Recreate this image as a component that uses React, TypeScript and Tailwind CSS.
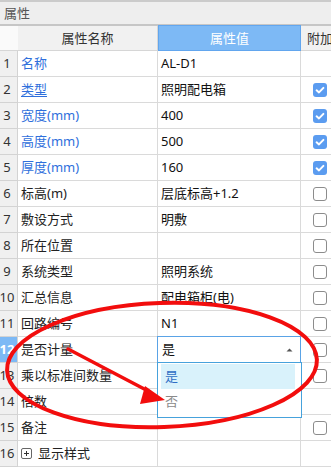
import React from "react";

type Row = {
  n: number;
  name: string;
  val: string;
  blue?: boolean;
  underline?: boolean;
  cb: boolean | null;
  plus?: boolean;
  selected?: boolean;
};

const rows: Row[] = [
  { n: 1, name: "名称", val: "AL-D1", blue: true, cb: null },
  { n: 2, name: "类型", val: "照明配电箱", blue: true, underline: true, cb: true },
  { n: 3, name: "宽度(mm)", val: "400", blue: true, cb: true },
  { n: 4, name: "高度(mm)", val: "500", blue: true, cb: true },
  { n: 5, name: "厚度(mm)", val: "160", blue: true, cb: true },
  { n: 6, name: "标高(m)", val: "层底标高+1.2", cb: false },
  { n: 7, name: "敷设方式", val: "明敷", cb: false },
  { n: 8, name: "所在位置", val: "", cb: false },
  { n: 9, name: "系统类型", val: "照明系统", cb: false },
  { n: 10, name: "汇总信息", val: "配电箱柜(电)", cb: false },
  { n: 11, name: "回路编号", val: "N1", cb: false },
  { n: 12, name: "是否计量", val: "是", cb: false, selected: true },
  { n: 13, name: "乘以标准间数量", val: "", cb: false },
  { n: 14, name: "倍数", val: "", cb: null },
  { n: 15, name: "备注", val: "", cb: false },
  { n: 16, name: "显示样式", val: "", cb: null, plus: true },
];

function Check({ on }: { on: boolean }) {
  if (on) {
    return (
      <div className="w-[14px] h-[14px] rounded-[3px] bg-[#5b9cf0] flex items-center justify-center">
        <svg width="14" height="14" viewBox="0 0 14 14">
          <path d="M3.6 7.3 L6 9.4 L10.4 4.9" stroke="#fff" strokeWidth="2" fill="none" strokeLinecap="round" strokeLinejoin="round" />
        </svg>
      </div>
    );
  }
  return <div className="w-[14px] h-[14px] rounded-[3px] border border-[#8c8c8c] bg-white" />;
}

export default function App() {
  return (
    <div className="relative w-[331px] h-[471px] overflow-hidden bg-white font-['Noto_Sans','Noto_Sans_CJK_SC',sans-serif] text-[13px] leading-none">
      <div className="h-[2px] bg-[#cbcbcb]" />
      <div className="h-[22px] bg-[#eeeeee] flex items-center pl-[4px] text-[#555555]">属性</div>
      <div className="h-[2px] bg-[#c6c6c6]" />

      {/* header */}
      <div className="grid grid-cols-[18px_140px_143px_30px] h-[25px]">
        <div className="bg-[#fafafa] border-b border-[#d6d6d6]" />
        <div className="bg-[#f1f1f1] border-b border-r border-[#d6d6d6] flex items-center justify-center text-[#333333]">属性名称</div>
        <div className="bg-[#7db9f5] border border-[#62a6ee] -mt-px flex items-center justify-center text-white">属性值</div>
        <div className="bg-[#f1f1f1] border-b border-[#d6d6d6] flex items-center pl-[6px] text-[#333333] whitespace-nowrap overflow-hidden">附加</div>
      </div>

      {/* rows */}
      <div className="flex flex-col">
        {rows.map((r) => (
          <div key={r.n} className="grid grid-cols-[18px_140px_143px_30px] h-[26px]">
            <div
              className={
                r.selected
                  ? "bg-[#7db9f5] border-b border-r border-[#d3d3d3] flex items-center justify-center pr-[3px] text-white font-bold"
                  : "bg-[#f0f0f0] border-b border-r border-[#d3d3d3] flex items-center justify-center pr-[3px] text-[#333333]"
              }
            >
              {r.n}
            </div>
            <div className="border-b border-r border-[#dadada] flex items-center pl-[3px] whitespace-nowrap">
              {r.plus ? (
                <div className="flex items-center gap-[6px]">
                  <div className="w-[11px] h-[11px] rounded-[2px] border border-[#666666] flex items-center justify-center">
                    <svg width="9" height="9" viewBox="0 0 9 9">
                      <path d="M2 4.5 H7 M4.5 2 V7" stroke="#333" strokeWidth="1" />
                    </svg>
                  </div>
                  <span className="text-[#222222]">{r.name}</span>
                </div>
              ) : (
                <span
                  className={
                    r.blue
                      ? r.underline
                        ? "text-[#2f6fdc] underline underline-offset-2"
                        : "text-[#2f6fdc]"
                      : "text-[#222222]"
                  }
                >
                  {r.name}
                </span>
              )}
            </div>
            <div className="relative border-b border-r border-[#dadada] flex items-center pl-[3px] text-[#111111] whitespace-nowrap">
              {r.selected && (
                <div className="absolute -left-px -top-px -right-px -bottom-px border border-[#5aa3e6] bg-white flex items-center pl-[4px] pr-[7px] justify-between">
                  <span className="text-[#111111]">{r.val}</span>
                  <svg width="7" height="4" viewBox="0 0 7 4">
                    <path d="M0.5 3.5 L3.5 0.5 L6.5 3.5 Z" fill="#555" />
                  </svg>
                </div>
              )}
              {!r.selected && r.val}
            </div>
            <div className="border-b border-[#dadada] flex items-center pl-[12px]">
              {r.cb !== null && <Check on={r.cb} />}
            </div>
          </div>
        ))}
      </div>

      {/* dropdown */}
      <div className="absolute left-[157px] top-[362px] w-[145px] h-[56px] border border-[#46a2dc] bg-white pt-[1px] pl-[3px] pr-[6px]">
        <div className="h-[25px] bg-[#d9f2fb] flex items-center pl-[4px] text-[#2e6ec4]">是</div>
        <div className="h-[25px] flex items-center pl-[4px] text-[#8a8a8a]">否</div>
      </div>

      {/* red annotation */}
      <svg className="absolute left-0 top-0 pointer-events-none" width="331" height="471" viewBox="0 0 331 471">
        <ellipse cx="162" cy="365" rx="155" ry="62" transform="rotate(-2 162 365)" stroke="#f20d0d" strokeWidth="4" fill="none" />
        <line x1="68" y1="349" x2="150" y2="392" stroke="#f20d0d" strokeWidth="3.5" strokeLinecap="round" />
        <polygon points="165,400 145,386 140,404" fill="#f20d0d" />
      </svg>
    </div>
  );
}
